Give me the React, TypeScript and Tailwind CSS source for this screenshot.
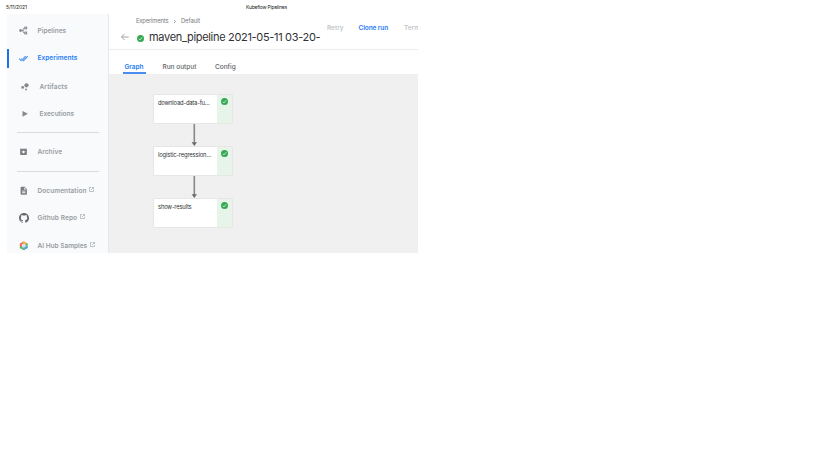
import type { ReactNode } from "react";

const FONT = "font-['Inter','Liberation_Sans',sans-serif]";

function Check({ size }: { size: number }) {
  return (
    <svg width={size} height={size} viewBox="0 0 24 24" className="block shrink-0">
      <circle cx="12" cy="12" r="12" fill="#34a853" />
      <path d="M6 12.5l4 4L18.2 8" fill="none" stroke="#fff" strokeWidth="2.6" />
    </svg>
  );
}

const icons: Record<string, ReactNode> = {
  pipelines: (
    <svg width="9" height="9" viewBox="0 0 20 20" fill="none" stroke="#85898e" strokeWidth="2.200">
      <circle cx="3.500" cy="10" r="2.300" fill="#85898e" />
      <path d="M6 10h3M13 4.500h-2L9 8v4l2 3.500h2" />
      <rect x="13" y="2.500" width="4" height="4" />
      <rect x="13" y="13.500" width="4" height="4" />
    </svg>
  ),
  experiments: (
    <svg width="9" height="9" viewBox="0 0 24 24" fill="#4a8df0">
      <path d="M18 7l-1.4-1.4-6.4 6.4 1.4 1.4L18 7zm4.2-1.4L11.6 16.2l-4.1-4.2L6 13.4 11.6 19 23.7 7l-1.5-1.4zM.4 13.4L6 19l1.4-1.4L1.8 12 .4 13.4z" stroke="#4a8df0" strokeWidth="1.200" />
    </svg>
  ),
  artifacts: (
    <svg width="10" height="10" viewBox="0 0 24 24" fill="#85898e">
      <circle cx="6.500" cy="13" r="3.400" />
      <circle cx="15.500" cy="8" r="5" />
      <circle cx="14.500" cy="18" r="2.300" />
    </svg>
  ),
  executions: (
    <svg width="10" height="10" viewBox="0 0 24 24" fill="#85898e">
      <path d="M6 4.500v14l13-7z" />
    </svg>
  ),
  archive: (
    <svg width="9" height="9" viewBox="0 0 24 24" fill="#7c8085">
      <path d="M20.5 5.2l-1.4-1.7c-.3-.3-.6-.5-1.1-.5H6c-.5 0-.9.2-1.2.5L3.500 5.200C3.200 5.600 3 6 3 6.500V19c0 1.100.9 2 2 2h14c1.100 0 2-.9 2-2V6.500c0-.5-.2-.9-.5-1.300zM12 17.500L6.500 12H10v-2h4v2h3.500L12 17.500zM5.100 5l.8-1h12l.9 1H5.100z" />
    </svg>
  ),
  doc: (
    <svg width="9.500" height="9.500" viewBox="0 0 24 24" fill="#7c8085">
      <path d="M14 2H6c-1.100 0-2 .9-2 2v16c0 1.100.9 2 2 2h12c1.100 0 2-.9 2-2V8l-6-6zm2 16H8v-2h8v2zm0-4H8v-2h8v2zm-3-5V3.500L18.500 9H13z" />
    </svg>
  ),
  github: (
    <svg width="10" height="10" viewBox="0 0 16 16" fill="#66696d">
      <path d="M8 0C3.580 0 0 3.580 0 8c0 3.540 2.290 6.530 5.470 7.590.4.070.55-.17.55-.38 0-.19-.01-.82-.01-1.490-2.010.37-2.530-.49-2.690-.94-.09-.23-.48-.94-.82-1.130-.28-.15-.68-.52-.01-.53.63-.01 1.080.58 1.230.82.72 1.210 1.870.87 2.330.66.07-.52.28-.87.51-1.070-1.780-.2-3.640-.89-3.640-3.950 0-.87.31-1.590.82-2.150-.08-.2-.36-1.020.08-2.120 0 0 .67-.21 2.200.82.64-.18 1.320-.27 2-.27s1.360.09 2 .27c1.530-1.040 2.200-.82 2.200-.82.44 1.100.16 1.920.08 2.120.51.56.82 1.270.82 2.150 0 3.070-1.870 3.750-3.650 3.950.29.25.54.73.54 1.480 0 1.070-.01 1.930-.01 2.200 0 .21.15.46.55.38A8.010 8.010 0 0 0 16 8c0-4.420-3.580-8-8-8z" />
    </svg>
  ),
  hub: (
    <svg width="9.500" height="9.500" viewBox="0 0 20 20" fill="none" strokeWidth="4.400" strokeLinecap="round">
      <path d="M4 13.400V6.600" stroke="#ea6a5e" />
      <path d="M4 6.600L10 3.200" stroke="#ee7c62" />
      <path d="M10 3.200L16 6.600" stroke="#f5b04c" />
      <path d="M16 6.600v6.800" stroke="#6fbb70" />
      <path d="M16 13.400L10 16.800" stroke="#5b96ee" />
      <path d="M10 16.800L4 13.400" stroke="#58b981" />
      <circle cx="10" cy="10" r="3" fill="#c8def8" stroke="none" />
    </svg>
  ),
};

function OpenIcon() {
  return (
    <svg width="5" height="5" viewBox="0 0 20 20" fill="none" stroke="#989ca1" strokeWidth="2.400" className="mb-[4px] ml-[2.5px] shrink-0">
      <path d="M9 2H2v16h16v-7M12 2h6v6M18 2L8 12" />
    </svg>
  );
}

type ItemProps = { icon: string; label: string; h: string; track: string; indent?: boolean; active?: boolean; external?: boolean };

function Item({ icon, label, h, track, indent, active, external }: ItemProps) {
  return (
    <div className={`flex shrink-0 items-center ${h}`}>
      <div className={`h-[19px] w-[1.5px] ${active ? "bg-[#1a73e8]" : ""}`} />
      <div className={`mb-[1px] flex w-[10px] shrink-0 justify-center ${indent ? "ml-[11.500px] mr-[9.500px]" : "ml-[10px] mr-[9px]"}`}>{icons[icon]}</div>
      <span className={`text-[6.5px] font-semibold leading-none whitespace-nowrap ${track} ${active ? "text-[#257df5]" : "text-[#989ca1]"}`}>{label}</span>
      {external && <OpenIcon />}
    </div>
  );
}

function Divider() {
  return <div className="ml-[9.5px] h-px w-[82px] shrink-0 bg-[#d9dcdf]" />;
}

function Node({ label, track }: { label: string; track: string }) {
  return (
    <div className="flex h-[30px] w-[80px] overflow-hidden rounded-[1px] border border-[#e6e6e6] bg-white">
      <div className="flex-1 pl-[4px] pt-[3.500px]">
        <span className={`block text-[5.8px] leading-[7px] whitespace-nowrap text-[#303134] ${track}`}>{label}</span>
      </div>
      <div className="flex w-[15px] justify-center bg-[#e6f4ea] pt-[2.500px]">
        <Check size={7} />
      </div>
    </div>
  );
}

function Arrow() {
  return (
    <svg width="8" height="22" viewBox="0 0 8 22" className="ml-[37px] block">
      <path d="M4.300 0v19" stroke="#85898d" strokeWidth="1.600" />
      <path d="M1.600 18.300h5.400L4.300 22z" fill="#696d71" />
    </svg>
  );
}

export default function App() {
  return (
    <div className={`h-[460px] w-[819px] overflow-hidden bg-white ${FONT}`}>
      <header className="flex h-[14px] items-center pl-[6px] pt-[1px] text-[5px] leading-none text-[#222]">
        <span className="w-[240px] tracking-[-0.120px]">5/11/2021</span>
        <span className="tracking-[-0.220px]">Kubeflow Pipelines</span>
      </header>
      <div className="ml-[7px] flex h-[239px] w-[411px] overflow-hidden">
        <nav className="flex w-[102px] shrink-0 flex-col overflow-hidden border-r border-[#e6e8ea] bg-[#f8fafc]">
          <div className="h-[3px] shrink-0" />
          <Item icon="pipelines" label="Pipelines" h="h-[28px]" track="tracking-[0px]" />
          <Item icon="experiments" label="Experiments" h="h-[27px]" track="tracking-[0.050px]" active />
          <Item icon="artifacts" label="Artifacts" h="h-[30px]" track="tracking-[0.100px]" indent />
          <Item icon="executions" label="Executions" h="h-[25px]" track="tracking-[0px]" indent />
          <div className="h-[5px] shrink-0" />
          <Divider />
          <Item icon="archive" label="Archive" h="h-[38px]" track="tracking-[0.050px]" />
          <Divider />
          <div className="h-[5px] shrink-0" />
          <Item icon="doc" label="Documentation" h="h-[28px]" track="tracking-[0.080px]" external />
          <Item icon="github" label="Github Repo" h="h-[27px]" track="tracking-[0.100px]" external />
          <Item icon="hub" label="AI Hub Samples" h="h-[28px]" track="tracking-[0px]" external />
        </nav>
        <main className="flex w-[309px] flex-col">
          <div className="flex h-[36px] shrink-0 border-b border-[#ececee]">
            <div className="w-[218px] shrink-0">
              <div className="flex h-[14px] items-center pl-[27px] text-[5.8px] leading-none text-[#77797d]">
                <span className="w-[36.500px] tracking-[-0.150px]">Experiments</span>
                <svg width="4" height="5" viewBox="0 0 8 10" fill="none" stroke="#808387" strokeWidth="1.500"><path d="M2 2l3 3-3 3" /></svg>
                <span className="ml-[4.500px] tracking-[-0.080px]">Default</span>
              </div>
              <div className="flex h-[19px] items-center pl-[11px]">
                <svg width="10" height="10" viewBox="0 0 20 20" fill="none" stroke="#96999d" strokeWidth="1.800" className="mb-[1px]"><path d="M17.500 10H3M9 4L3 10l6 6" /></svg>
                <div className="ml-[6.500px] mt-[2px]"><Check size={7} /></div>
                <span className="ml-[5.500px] text-[11px] leading-none tracking-[-0.320px] whitespace-nowrap text-[#303134]">maven_pipeline 2021-05-11 03-20-</span>
              </div>
            </div>
            <div className="flex h-[28px] items-center text-[6.5px] leading-none font-medium whitespace-nowrap text-[#bdbfc1]">
              <span className="w-[31.500px]">Retry</span>
              <span className="w-[45.500px] font-semibold tracking-[-0.100px] text-[#257df5]">Clone run</span>
              <span>Term</span>
            </div>
          </div>
          <div className="flex h-[24px] shrink-0 items-end pl-[13.500px] text-[6.5px] leading-none font-medium whitespace-nowrap text-[#606368]">
            <div className="flex h-[12px] w-[23px] justify-center border-b-2 border-[#4a8cf0] pt-[2px] font-semibold text-[#257df5]">Graph</div>
            <span className="ml-[17px] h-[10px] w-[52.500px]">Run output</span>
            <span className="h-[10px]">Config</span>
          </div>
          <div className="flex flex-1 flex-col bg-[#f0f0f0] pt-[20px] pl-[44px]">
            <Node label="download-data-fu…" track="tracking-[-0.180px]" />
            <Arrow />
            <Node label="logistic-regression…" track="tracking-[-0.150px]" />
            <Arrow />
            <Node label="show-results" track="tracking-[-0.180px]" />
          </div>
        </main>
      </div>
    </div>
  );
}
